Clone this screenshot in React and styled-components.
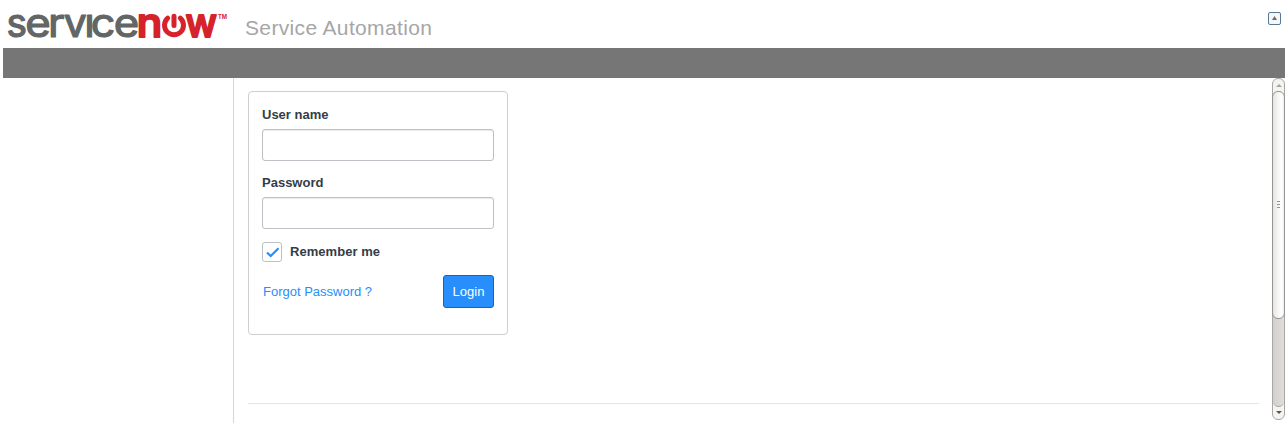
import React from 'react';
import styled, { createGlobalStyle } from 'styled-components';

const Global = createGlobalStyle`
  *, *::before, *::after { box-sizing: border-box; }
  html, body { margin: 0; background: #fff; }
  body { font-family: "Liberation Sans", Arial, sans-serif; font-size: 13px; color: #343d47; }
`;
const Page = styled.div`
  display: flex;
  flex-direction: column;
  width: 1288px;
  height: 423px;
  padding: 0 3px;
`;
const Header = styled.header`
  display: flex;
  height: 48px;
  flex: none;
`;
const Logo = styled.svg`
  flex: none;
  width: 230px;
  height: 48px;
  overflow: visible;
  font-family: Inter, sans-serif;
  stroke-linejoin: round;
`;
const Tagline = styled.h1`
  margin: 14px 0 0 12px;
  font-size: 21px;
  line-height: 27px;
  font-weight: 400;
  letter-spacing: 0.35px;
  color: #a6a6a6;
  white-space: nowrap;
`;
const Collapse = styled.button`
  display: flex;
  align-items: center;
  justify-content: center;
  width: 13px;
  height: 13px;
  margin: 12px 4px 0 auto;
  padding: 0;
  border: 1px solid #58789a;
  border-radius: 2px;
  background: #f7f7f7;
`;
const NavBar = styled.div`
  height: 30px;
  flex: none;
  background: #767676;
`;
const Body = styled.div`
  display: flex;
  flex: 1;
  min-height: 0;
`;
const Sidebar = styled.aside`
  width: 231px;
  border-right: 1px solid #d6d6d6;
`;
const Main = styled.main`
  flex: 1;
  padding: 13px 13px 0 14px;
`;
const Card = styled.form`
  display: flex;
  flex-direction: column;
  width: 260px;
  height: 244px;
  padding: 15px 13px 0;
  border: 1px solid #cfcfcf;
  border-radius: 4px;
`;
const Label = styled.label`
  height: 16px;
  margin-bottom: 6px;
  line-height: 16px;
  font-weight: 700;
`;
const Input = styled.input`
  width: 232px;
  height: 32px;
  margin: 0 0 14px;
  border: 1px solid #bdc0c4;
  border-radius: 3px;
  background: #fff;
  box-shadow: inset 0 1px 1px rgba(0, 0, 0, 0.08);
`;
const Remember = styled.div`
  display: flex;
  align-items: flex-start;
  gap: 8px;
  height: 20px;
  margin-top: -1px;
  font-weight: 700;
`;
const RememberText = styled.span`
  line-height: 18px;
  padding-top: 1px;
  letter-spacing: 0.04px;
`;
const Check = styled.span`
  display: flex;
  width: 20px;
  height: 20px;
  border: 1px solid #bdc0c4;
  border-radius: 3px;
`;
const Actions = styled.div`
  display: flex;
  align-items: center;
  justify-content: space-between;
  height: 33px;
  margin-top: 13px;
  padding-left: 1px;
`;
const Link = styled.a`
  color: #278efc;
`;
const Login = styled.button`
  width: 51px;
  height: 33px;
  padding: 0;
  border: 1px solid #0368d4;
  border-radius: 3px;
  background: #278efc;
  color: #fff;
  font: 13px "Liberation Sans", Arial, sans-serif;
`;
const Rule = styled.hr`
  height: 1px;
  margin: 68px 0 0;
  border: 0;
  background: #e5e5e5;
`;
const ScrollBar = styled.div`
  display: flex;
  flex-direction: column;
  width: 13px;
  height: 342px;
  border: 1px solid #aaa6a2;
  border-radius: 6px;
  background: #f4f4f3;
`;
const ArrowBox = styled.div`
  display: flex;
  align-items: center;
  justify-content: center;
  height: 13px;
`;
const Thumb = styled.div`
  position: relative;
  display: flex;
  flex-direction: column;
  align-items: center;
  justify-content: center;
  gap: 2px;
  width: 13px;
  height: 228px;
  margin: -1px 0 0 -1px;
  padding-bottom: 2px;
  border: 1px solid #969390;
  border-radius: 6px;
  background: linear-gradient(90deg, #e6e5e4, #fff 75%, #f1f1f1);
`;
const Grip = styled.span`
  width: 3px;
  height: 1px;
  background: #96938f;
`;
const Track = styled.div`
  flex: 1;
  margin: -6px 0 -1px;
  border-bottom: 1px solid #aaa6a2;
  border-radius: 0 0 6px 6px;
  background: linear-gradient(90deg, #d0cfcd, #e0dfdd);
`;

// Horizontal start and advance of each wordmark letter.
const serviceLetters = [
  ['s', 6.6, 20.5],
  ['e', 25.2, 25.5],
  ['r', 48, 16.5],
  ['v', 63.8, 23],
  ['i', 84.2, 10.5],
  ['c', 90.8, 24.5],
  ['e', 113.8, 25.5],
];

export default function App() {
  return (
    <Page>
      <Global />
      <Header>
        <Logo viewBox="3 0 230 48" role="img" aria-label="servicenow">
          <clipPath id="dotless"><rect x="84" y="13" width="11" height="27" /></clipPath>
          <g fontSize="40" fill="#636666" stroke="#636666" strokeWidth="1.2">
            {serviceLetters.map(([letter, x, width]) => (
              <text
                key={x}
                x={x}
                y="37.2"
                textLength={width}
                lengthAdjust="spacingAndGlyphs"
                clipPath={letter === 'i' ? 'url(#dotless)' : undefined}
              >
                {letter}
              </text>
            ))}
          </g>
          <g fontSize="39.5" fontWeight="500" fill="#d6222b" stroke="#d6222b" strokeWidth="2">
            <text y="37" x="136.8" textLength="25.5" lengthAdjust="spacingAndGlyphs">n</text>
            <text y="37" x="185.5" textLength="31.5" lengthAdjust="spacingAndGlyphs">w</text>
          </g>
          <path d="M167.7 18.2A9.5 9.5 0 1 0 180.3 18.2M174 16.3V25.5" fill="none" stroke="#d6222b" strokeWidth="5" strokeLinecap="round" />
          <text x="218" y="19" fontSize="5.6" fontWeight="700" fill="#d6222b">TM</text>
        </Logo>
        <Tagline>Service Automation</Tagline>
        <Collapse aria-label="Collapse">
          <svg width="5" height="5" viewBox="0 0 5 5"><path d="M2.5 0L5 4H0Z" fill="#666d75" /></svg>
        </Collapse>
      </Header>
      <NavBar />
      <Body>
        <Sidebar />
        <Main>
          <Card>
            <Label htmlFor="user">User name</Label>
            <Input id="user" />
            <Label htmlFor="pass">Password</Label>
            <Input id="pass" type="password" />
            <Remember>
              <Check>
                <svg width="18" height="18" viewBox="0 0 18 18"><path d="M4 9.5L7.7 13L15.5 5.2" fill="none" stroke="#278efc" strokeWidth="2.2" /></svg>
              </Check>
              <RememberText>Remember me</RememberText>
            </Remember>
            <Actions>
              <Link>Forgot Password ?</Link>
              <Login type="button">Login</Login>
            </Actions>
          </Card>
          <Rule />
        </Main>
        <ScrollBar>
          <ArrowBox>
            <svg width="6" height="3" viewBox="0 0 6 3"><path d="M3 0L6 3H0Z" fill="#a3a3a3" /></svg>
          </ArrowBox>
          <Thumb><Grip /><Grip /><Grip /></Thumb>
          <Track />
          <ArrowBox>
            <svg width="6" height="3" viewBox="0 0 6 3"><path d="M0 0H6L3 3Z" fill="#555" /></svg>
          </ArrowBox>
        </ScrollBar>
      </Body>
    </Page>
  );
}
